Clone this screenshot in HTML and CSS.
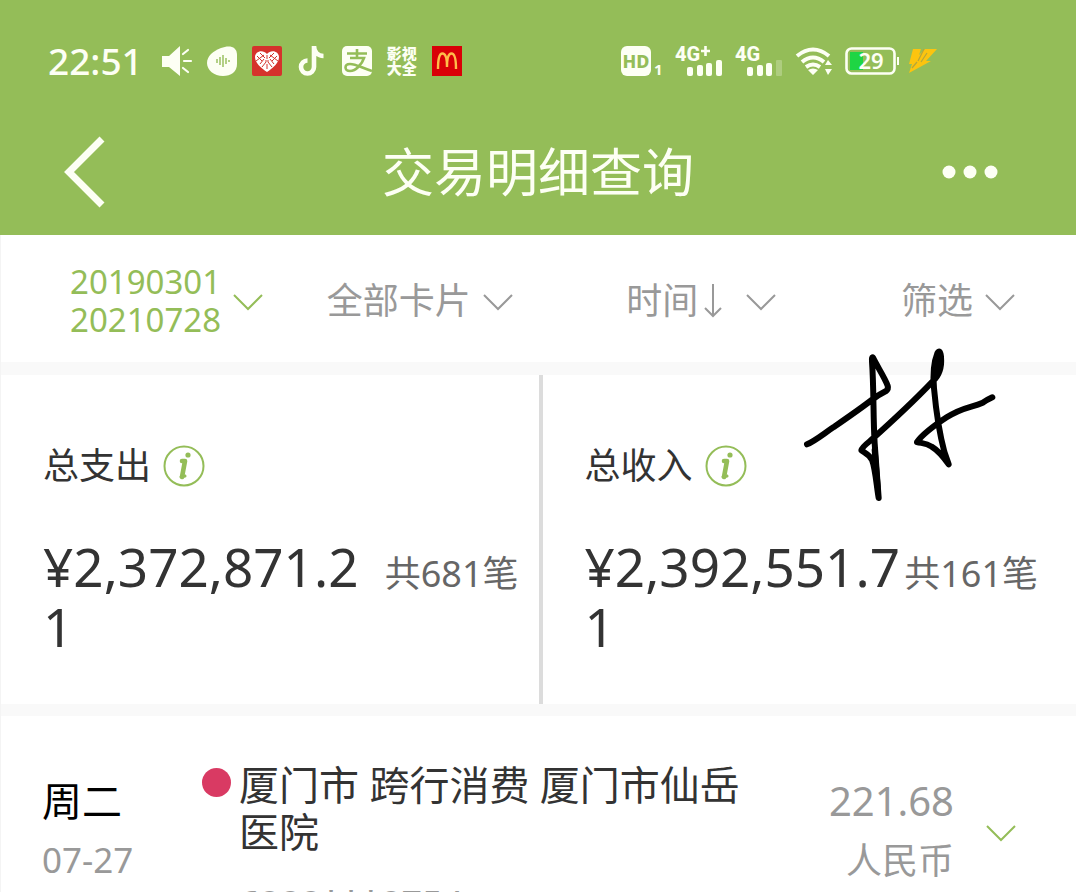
FILE: index.html
```html
<!DOCTYPE html>
<html lang="zh-CN">
<head>
<meta charset="utf-8">
<meta name="viewport" content="width=device-width, initial-scale=1">
<title>交易明细查询</title>
<link rel="stylesheet" href="styles.css">
</head>
<body>
<header class="top">
  <div class="status">
    <div class="status-group">
      <span class="clock">22:51</span>
      <svg class="icon" viewBox="0 0 30 30"><path d="M0 10h7L18 0v30L7 21H0z" fill="currentColor"/><path d="M21 8l5-4M22 15h7M21 22l5 4" stroke="currentColor" stroke-width="2.200" fill="none" stroke-linecap="round"/></svg>
      <svg class="icon" viewBox="0 0 30 30"><path d="M14 2C22-1 30 0 30 9v9c0 8-6 12-14 12C7 30 0 24 0 17 0 10 6 5 14 2z" fill="currentColor"/><path d="M10 13v4M13 11v8M16 9v12M19 12v6M22 14v2" stroke="#94bd58" stroke-width="1.400"/></svg>
      <svg class="icon" viewBox="0 0 30 30"><rect width="30" height="30" rx="2" fill="#d5322c"/><path d="M15 26C9 22 3 17 3 11c0-6 8-8 12-3 4-5 12-3 12 3 0 6-6 11-12 15z" fill="#fff"/><path d="M5 10l5 5M8 7l5 5M4 15l8-6M8 18l4-5M10 21l4-5M13 15h4M15 9v4M15 18v5M25 10l-5 5M22 7l-5 5M26 15l-8-6M22 18l-4-5M20 21l-4-5" stroke="#d5322c" stroke-width="1"/></svg>
      <svg class="icon" viewBox="0 0 30 30"><path d="M17 0v21a6.500 6.500 0 1 1-6.500-6.500M17 0c0 6 4 10 9.500 10" fill="none" stroke="currentColor" stroke-width="4.600"/></svg>
      <svg class="icon" viewBox="0 0 30 30"><rect width="30" height="30" rx="5" fill="currentColor"/><path d="M5 7.500h20M15 3v9M8 12h14c-2 6-8 13-14 13-6 0-6-7 0-7 6 0 12 4 22 7" fill="none" stroke="#94bd58" stroke-width="2.600"/></svg>
      <span class="app-text">影视<br>大全</span>
      <svg class="icon" viewBox="0 0 30 30"><path d="M0 0h30v30H0z" fill="#d90007"/><path d="M6 23C6 14 7 7.500 10.500 7.500S15 14 15 21c0-7 1-13.500 4.500-13.500S24 14 24 23" fill="none" stroke="#ffbc4a" stroke-width="2.400"/></svg>
    </div>
    <div class="status-group status-right">
      <svg width="42" height="30" viewBox="0 0 42 30"><rect width="30" height="30" rx="6" fill="currentColor"/><text x="15" y="22" class="hd" text-anchor="middle">HD</text><text x="33" y="29" class="sub">1</text></svg>
      <svg width="48" height="30" viewBox="0 0 48 30"><text x="0" y="15" class="net">4G</text><path d="M26 5h9M30.500 0v10" stroke="currentColor" stroke-width="2.600"/><g fill="currentColor"><rect x="12" y="21" width="6" height="9" rx="2"/><rect x="22" y="19" width="6" height="11" rx="2"/><rect x="31" y="17" width="6" height="13" rx="2"/><rect x="41" y="14" width="6" height="16" rx="2"/></g></svg>
      <svg width="48" height="30" viewBox="0 0 48 30"><text x="0" y="15" class="net">4G</text><g fill="currentColor"><rect x="12" y="21" width="6" height="9" rx="2"/><rect x="22" y="19" width="6" height="11" rx="2"/><rect x="31" y="17" width="6" height="13" rx="2"/><rect x="41" y="14" width="6" height="16" rx="1" opacity=".25"/></g></svg>
      <svg width="38" height="30" viewBox="0 0 38 30"><path d="M2 10q16-13 32 0M7 16q11-9 22 0M11 21q7-5 14 0" fill="none" stroke="currentColor" stroke-width="4"/><path d="M13 24q5-3 10 0l-5 5zM30 19l3-5 4 5zM30 23h7l-4 6z" fill="currentColor"/></svg>
      <svg class="battery" width="54" height="28" viewBox="0 0 54 28"><rect x="5" y="5" width="13" height="18" fill="#1ed544"/><rect x="1.500" y="1.500" width="48" height="25" rx="5" fill="none" stroke="currentColor" stroke-width="2.600"/><path d="M53 10v8" stroke="currentColor" stroke-width="2"/><text x="26" y="22" class="level" text-anchor="middle">29</text></svg>
      <svg width="30" height="26" viewBox="0 0 30 26"><path d="M5 1h8l-2 6 6-6h12L18 13h5L1 25l3-9H1z" fill="#fcc40f"/><path d="M16 1l-6 12M19 5l-6 9M9 14l-5 6" fill="none" stroke="#b5a63a" stroke-width="1.200"/></svg>
    </div>
  </div>
  <div class="titlebar">
    <button class="bar-btn" aria-label="返回"><svg width="42" height="72" viewBox="0 0 42 72"><path d="M38 3L5 36l33 33" fill="none" stroke="currentColor" stroke-width="7"/></svg></button>
    <h1 class="title">交易明细查询</h1>
    <button class="bar-btn bar-more" aria-label="更多"><svg width="56" height="14" viewBox="0 0 56 14" fill="currentColor"><circle cx="7" cy="7" r="6.500"/><circle cx="28" cy="7" r="6.500"/><circle cx="49" cy="7" r="6.500"/></svg></button>
  </div>
</header>
<main class="content">
  <nav class="filters">
    <button class="filter filter-active"><span>20190301<br>20210728</span><svg class="chevron" viewBox="0 0 30 16"><path d="M1 1l14 14L29 1"/></svg></button>
    <button class="filter"><span>全部卡片</span><svg class="chevron" viewBox="0 0 30 16"><path d="M1 1l14 14L29 1"/></svg></button>
    <button class="filter filter-sort"><span>时间</span><svg class="sort" viewBox="0 0 18 34"><path d="M9 0v32M1 24l8 8 8-8"/></svg><svg class="chevron" viewBox="0 0 30 16"><path d="M1 1l14 14L29 1"/></svg></button>
    <button class="filter"><span>筛选</span><svg class="chevron" viewBox="0 0 30 16"><path d="M1 1l14 14L29 1"/></svg></button>
  </nav>
  <section class="summary">
    <div class="total">
      <div class="total-head"><span>总支出</span><button class="info" aria-label="支出说明"><svg width="42" height="42" viewBox="0 0 42 42"><circle cx="21" cy="21" r="19.500" fill="none" stroke="currentColor" stroke-width="2"/><circle cx="25" cy="10" r="2.600" fill="currentColor"/><path d="M19 16h3l-3 16" fill="none" stroke="currentColor" stroke-width="4.600" stroke-linejoin="round" stroke-linecap="round"/><path d="M18 32l4-1" stroke="currentColor" stroke-width="3" stroke-linecap="round"/></svg></button></div>
      <div class="total-row"><strong class="amount">¥2,372,871.21</strong><span class="count">共681笔</span></div>
    </div>
    <div class="total total-in">
      <div class="total-head"><span>总收入</span><button class="info" aria-label="收入说明"><svg width="42" height="42" viewBox="0 0 42 42"><circle cx="21" cy="21" r="19.500" fill="none" stroke="currentColor" stroke-width="2"/><circle cx="25" cy="10" r="2.600" fill="currentColor"/><path d="M19 16h3l-3 16" fill="none" stroke="currentColor" stroke-width="4.600" stroke-linejoin="round" stroke-linecap="round"/><path d="M18 32l4-1" stroke="currentColor" stroke-width="3" stroke-linecap="round"/></svg></button></div>
      <div class="total-row"><strong class="amount">¥2,392,551.71</strong><span class="count">共161笔</span></div>
    </div>
    <svg class="scribble" viewBox="0 0 720 510"><path d="M81 313C105 303 130 282 160 262C205 231 240 207 275 180C292 167 306 159 318 153Q326 147 323 137C314 112 292 80 279 53Q275 49 276 65C282 150 279 230 284 310C288 370 292 420 296 474C290 440 286 385 276 360C268 343 252 338 244 331Q246 322 270 303C335 245 400 185 458 124C476 108 486 85 483 50Q480 26 472 40C460 70 458 100 462 145C467 200 478 280 493 335L506 373C490 350 475 332 455 320C438 308 425 310 411 306C432 278 465 255 500 232C550 200 575 203 608 188Q620 180 637 172"/><path d="M478 40L468 108M284 330L293 440"/></svg>
  </section>
  <ul class="list">
    <li class="entry">
      <div class="day"><span class="weekday">周二</span><time class="date">07-27</time></div>
      <div class="detail"><i class="dot"></i><div class="detail-text"><p class="desc">厦门市 跨行消费 厦门市仙岳医院</p><p class="card-no">6222***2754</p></div></div>
      <div class="money"><span class="value">221.68</span><span class="currency">人民币</span></div>
      <button class="expand" aria-label="展开"><svg class="chevron" viewBox="0 0 30 16"><path d="M1 1l14 14L29 1"/></svg></button>
    </li>
  </ul>
</main>
</body>
</html>
```
FILE: styles.css
```css
* { box-sizing: border-box; }
body {
  margin: 0;
  height: 100vh;
  overflow: hidden;
  background: #fff;
  color: #333;
  font-family: "Noto Sans", "Noto Sans CJK SC", sans-serif;
}
button {
  padding: 0;
  border: 0;
  background: none;
  color: inherit;
  font: inherit;
  cursor: pointer;
}
svg { display: block; flex: none; overflow: visible; }
.top { background: #94bd58; color: #fdfff4; }
.status {
  display: flex;
  justify-content: space-between;
  align-items: center;
  height: 122px;
  padding: 0 138px 0 48px;
}
.status-group { display: flex; align-items: center; gap: 15px; }
.status-right { gap: 12px; }
.battery { margin-right: -3px; }
.clock { margin-right: 4px; font-size: 37px; font-weight: 500; line-height: 40px; }
.icon { width: 30px; height: 30px; }
.app-text { width: 30px; font-size: 15px; font-weight: 900; line-height: 15px; }
.hd { fill: #94bd58; font-size: 18px; font-weight: 800; }
.sub { fill: currentColor; font-size: 15px; font-weight: 700; }
.net { fill: currentColor; font-size: 20px; font-weight: 800; font-family: Roboto, sans-serif; }
.level { fill: currentColor; font-size: 22px; font-weight: 600; }
.titlebar {
  display: grid;
  grid-template-columns: 1fr auto 1fr;
  align-items: center;
  height: 113px;
  padding: 0 64px 14px;
}
.bar-btn { justify-self: start; }
.bar-more { justify-self: end; margin-right: 14px; }
.title { margin: 0; font-size: 52px; font-weight: 400; line-height: 60px; }
.content { border-left: 1px solid #f4f4f4; }
.filters {
  display: grid;
  grid-template-columns: 257fr 300fr 275fr auto;
  align-items: center;
  height: 127px;
  padding: 4px 61px 0 69px;
  color: #999;
}
.filter {
  display: flex;
  align-items: center;
  gap: 12px;
  font-size: 36px;
  line-height: 44px;
  text-align: left;
  white-space: nowrap;
}
.filter-active { color: #94bd58; font-size: 33px; line-height: 38px; }
.filter-sort { gap: 6px; }
.filter-sort .chevron { margin-left: 18px; }
.chevron { width: 30px; height: 16px; margin-top: 2px; fill: none; stroke: currentColor; stroke-width: 2; }
.sort { width: 18px; height: 34px; fill: none; stroke: currentColor; stroke-width: 2; }
.summary {
  position: relative;
  display: grid;
  grid-template-columns: 1fr 1fr;
  border-top: 13px solid #f9f9f9;
  border-bottom: 12px solid #f9f9f9;
}
.total { padding: 69px 20px 47px 42px; }
.total-in { padding-right: 38px; border-left: 4px solid #dcdcdc; }
.total-head { display: flex; align-items: center; gap: 12px; font-size: 36px; line-height: 44px; }
.info { color: #94bd58; }
.total-row { display: flex; justify-content: space-between; align-items: baseline; margin-top: 49px; }
.amount {
  flex: 0 1 6em;
  font-size: 53px;
  font-weight: 400;
  line-height: 60px;
  word-break: break-all;
}
.count { flex: none; color: #666; font-size: 36px; line-height: 44px; white-space: nowrap; }
.scribble {
  position: absolute;
  top: -35px;
  right: 56px;
  width: 240px;
  height: 170px;
  fill: none;
  stroke: #000;
  stroke-width: 18;
  stroke-linecap: round;
  stroke-linejoin: round;
}
.list { margin: 0; padding: 0; list-style: none; }
.entry { display: flex; align-items: flex-start; padding: 45px 60px 24px 41px; }
.day { display: flex; flex: none; flex-direction: column; width: 160px; padding-top: 14px; }
.weekday { color: #000; font-size: 40px; line-height: 52px; }
.date { padding-top: 11px; color: #999; font-size: 35px; line-height: 44px; }
.detail { display: flex; flex: 1; gap: 8px; }
.dot { flex: none; width: 29px; height: 29px; margin-top: 7px; border-radius: 50%; background: #d93a63; }
.desc { max-width: 520px; margin: 0; font-size: 40px; line-height: 47px; }
.card-no { margin: 27px 0 0; color: #999; font-size: 36px; line-height: 44px; }
.money {
  display: flex;
  flex: none;
  flex-direction: column;
  align-items: flex-end;
  padding-top: 14px;
  color: #999;
}
.value { font-size: 40px; line-height: 52px; }
.currency { padding-top: 12px; font-size: 36px; line-height: 44px; }
.expand { margin: 62px 0 0 32px; color: #94bd58; }
```
